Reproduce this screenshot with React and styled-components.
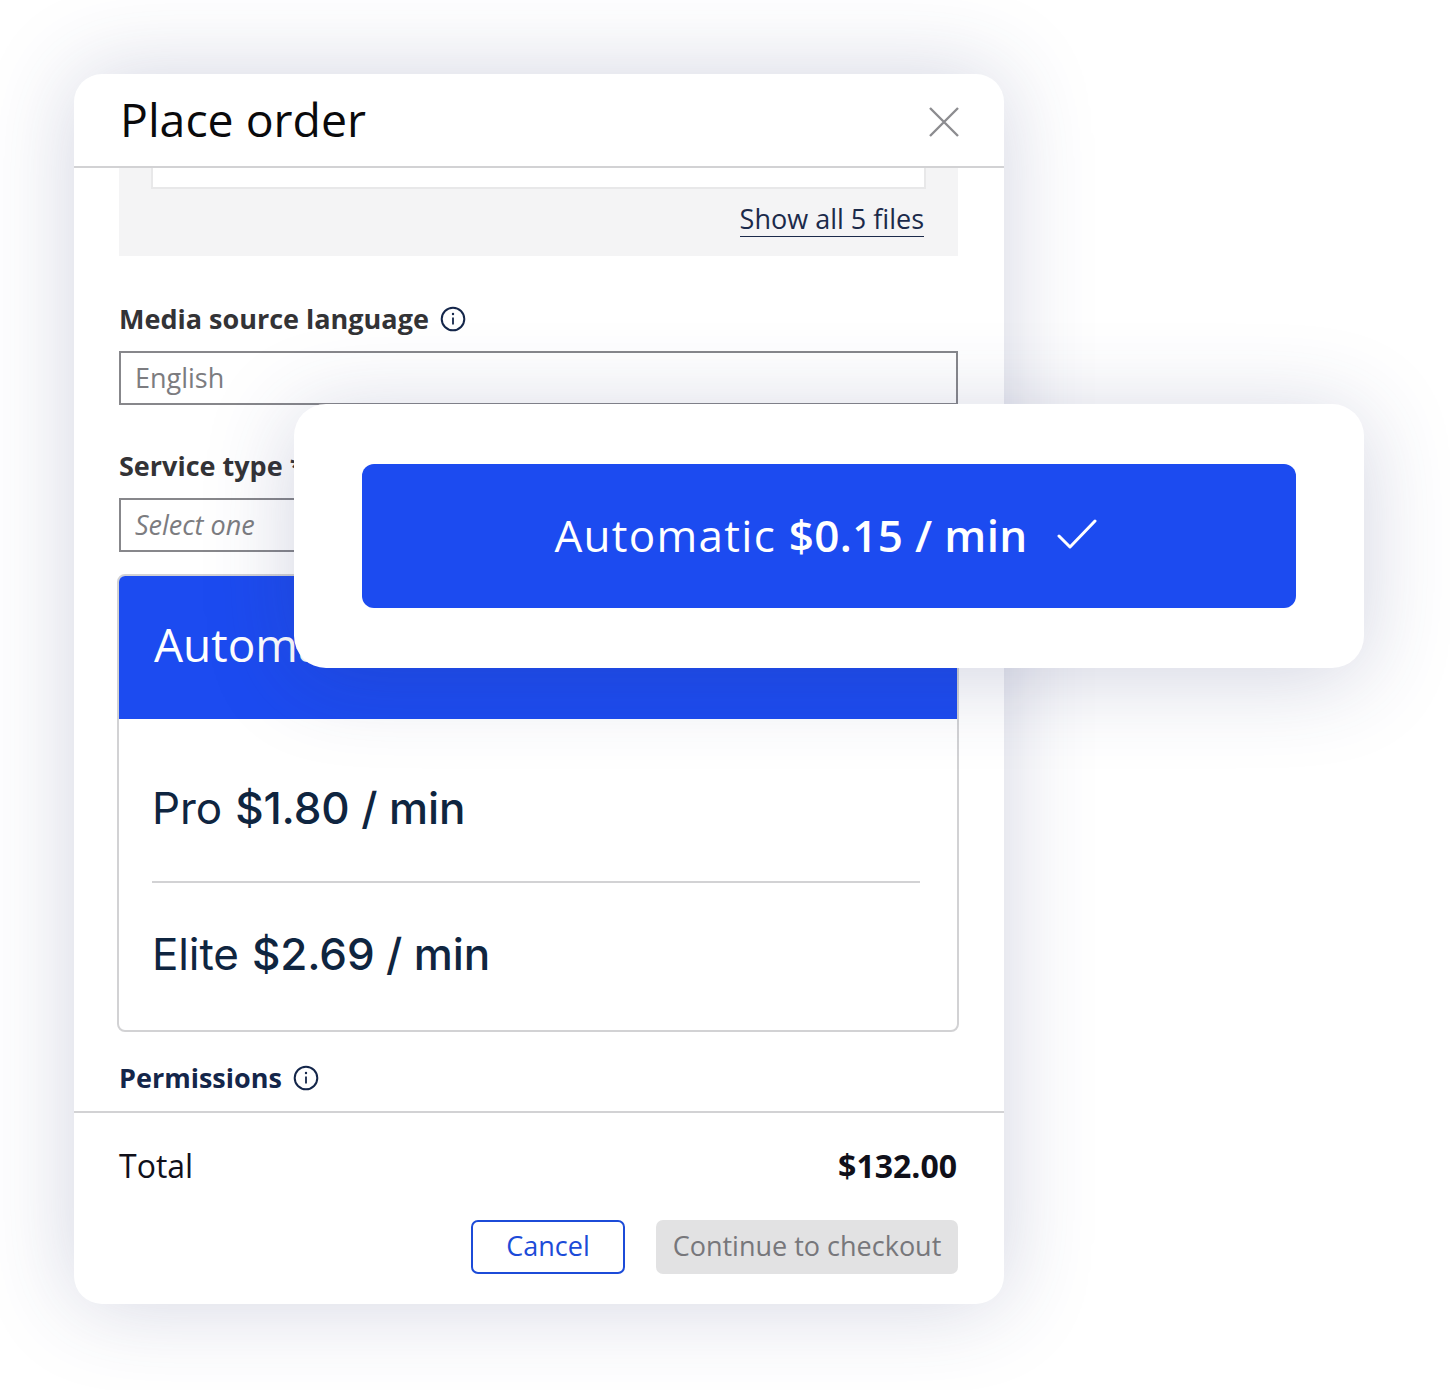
import React from 'react';
import styled, { createGlobalStyle } from 'styled-components';

const Global = createGlobalStyle`
  html, body { margin: 0; padding: 0; background: #fff; }
  body { font-family: "Open Sans", "Liberation Sans", sans-serif; }
  * { box-sizing: border-box; }
`;

const Page = styled.div`
  position: relative;
  width: 1450px;
  height: 1390px;
  padding: 74px;
  overflow: hidden;
`;

const Modal = styled.section`
  width: 930px;
  height: 1230px;
  background: #fff;
  border-radius: 28px;
  box-shadow: 0 0 90px rgba(50, 60, 120, 0.22);
  display: flex;
  flex-direction: column;
  overflow: hidden;
`;

const Header = styled.header`
  height: 94px;
  flex: none;
  border-bottom: 2px solid #d2d2d4;
  padding: 0 45px 0 46px;
  display: flex;
  align-items: center;
  justify-content: space-between;
`;

const Title = styled.h1`
  margin: -2px 0 0;
  font-size: 46.4px;
  font-weight: 400;
  color: #0a0a0c;
  line-height: 94px;
`;

const CloseButton = styled.span`
  display: flex;
  color: #8c8c90;
  margin-top: 4px;
`;

const Body = styled.div`
  flex: 1;
  padding: 0 46px 0 45px;
  overflow: hidden;
`;

const FilePanel = styled.div`
  height: 88px;
  background: #f4f4f5;
  padding: 0 32px;
`;

const FileStrip = styled.div`
  height: 21px;
  background: #fff;
  border: 2px solid #e8e8e9;
  border-top: 0;
`;

const ShowAllRow = styled.div`
  display: flex;
  justify-content: flex-end;
  padding: 13px 2px 0 0;
`;

const ShowAll = styled.a`
  font-size: 27px;
  line-height: 34px;
  color: #1b2a4a;
  border-bottom: 1px solid #1b2a4a;
`;

const Field = styled.div`
  padding-top: ${(p) => p.$top}px;
`;

const Label = styled.div`
  display: flex;
  align-items: center;
  gap: 11px;
  height: 36px;
  font-size: 27px;
  font-weight: 700;
  color: ${(p) => p.$color || '#333336'};
  white-space: nowrap;
`;

const LabelText = styled.span`
  position: relative;
  top: -1px;
`;

const InfoIcon = styled.svg`
  width: 26px;
  height: 26px;
  flex: none;
  color: #14264a;
`;

const Input = styled.div`
  height: 54px;
  margin-top: ${(p) => p.$gap}px;
  border: 2px solid #87878b;
  padding: 0 14px 2px;
  display: flex;
  align-items: center;
  font-size: 27px;
  font-style: ${(p) => (p.$italic ? 'italic' : 'normal')};
  color: #7c7c80;
`;

const OptionCard = styled.div`
  margin: 22px -1px 0 -2px;
  height: 458px;
  border: 2px solid #d2d2d4;
  border-radius: 8px;
  overflow: hidden;
`;

const SelectedOption = styled.div`
  margin: -1px -1px 0;
  height: 144px;
  background: #1c4bf0;
  display: flex;
  align-items: center;
  padding: 0 0 6px 36px;
  font-size: 46px;
  color: #fff;
`;

const OptionList = styled.div`
  padding: 0 37px 0 33px;
`;

const Option = styled.div`
  height: ${(p) => p.$h}px;
  display: flex;
  align-items: center;
  gap: 0.3em;
  font-family: Inter, "Liberation Sans", sans-serif;
  font-size: 44px;
  letter-spacing: -0.12px;
  color: #0f2540;
  border-bottom: ${(p) => (p.$rule ? '2px solid #d2d2d4' : '0')};
  padding-top: ${(p) => p.$pad || 0}px;
`;

const Price = styled.b`
  font-weight: 500;
`;

const Footer = styled.footer`
  height: 193px;
  flex: none;
  border-top: 2px solid #d2d2d4;
  padding: 0 47px 0 45px;
`;

const TotalRow = styled.div`
  height: 107px;
  display: flex;
  align-items: center;
  justify-content: space-between;
  padding-bottom: 3px;
  font-size: 32px;
  color: #10101a;
`;

const TotalValue = styled.b`
  font-weight: 700;
  font-size: 32px;
`;

const Actions = styled.div`
  display: flex;
  justify-content: flex-end;
  gap: 31px;
  margin-right: -1px;
`;

const GhostButton = styled.button`
  width: 154px;
  height: 54px;
  font: inherit;
  font-size: 27px;
  color: #1c4bd8;
  background: #fff;
  border: 2px solid #1c4bd8;
  border-radius: 7px;
  padding: 0 0 3px;
`;

const DisabledButton = styled.button`
  width: 302px;
  height: 54px;
  font: inherit;
  font-size: 27px;
  color: #77777b;
  background: #e2e2e3;
  border: 0;
  border-radius: 7px;
  padding: 0 0 3px;
  white-space: nowrap;
`;

const FloatCard = styled.div`
  position: absolute;
  left: 294px;
  top: 404px;
  width: 1070px;
  height: 264px;
  padding: 60px 68px;
  background: #fff;
  border-radius: 32px;
  box-shadow: 0 10px 90px rgba(50, 60, 120, 0.22);
`;

const FloatButton = styled.div`
  height: 144px;
  background: #1c4bf0;
  border-radius: 12px;
  display: flex;
  align-items: center;
  justify-content: center;
  gap: 29px;
  padding: 0 7px 3px 0;
  font-size: 44px;
  color: #fff;
  letter-spacing: 1.3px;
`;

const FloatLabel = styled.span`
  white-space: pre;
`;

const FloatPrice = styled.b`
  font-weight: 600;
  letter-spacing: 0.35px;
`;

const Info = () => (
  <InfoIcon viewBox="0 0 26 26" fill="none" stroke="currentColor">
    <circle cx="13" cy="13" r="11.3" strokeWidth="2" />
    <path d="M13 11.5v7" strokeWidth="1.8" />
    <circle cx="13" cy="8" r="1.2" fill="currentColor" stroke="none" />
  </InfoIcon>
);

export default function App() {
  return (
    <>
      <Global />
      <Page>
        <Modal>
          <Header>
            <Title>Place order</Title>
            <CloseButton>
              <svg width="30" height="30" viewBox="0 0 30 30" fill="none" stroke="currentColor" strokeWidth="2.4">
                <path d="M1 1l28 28M29 1L1 29" />
              </svg>
            </CloseButton>
          </Header>
          <Body>
            <FilePanel>
              <FileStrip />
              <ShowAllRow>
                <ShowAll>Show all 5 files</ShowAll>
              </ShowAllRow>
            </FilePanel>
            <Field $top={45}>
              <Label>
                <LabelText>Media source language</LabelText>
                <Info />
              </Label>
              <Input $gap={14}>English</Input>
            </Field>
            <Field $top={43}>
              <Label>
                <LabelText>Service type *</LabelText>
              </Label>
              <Input $gap={14} $italic>Select one</Input>
            </Field>
            <OptionCard>
              <SelectedOption>Automatic</SelectedOption>
              <OptionList>
                <Option $h={164} $pad={16} $rule>
                  <span>Pro</span>
                  <Price>$1.80 / min</Price>
                </Option>
                <Option $h={141}>
                  <span>Elite</span>
                  <Price>$2.69 / min</Price>
                </Option>
              </OptionList>
            </OptionCard>
            <Field $top={28}>
              <Label $color="#14264a">
                <LabelText>Permissions</LabelText>
                <Info />
              </Label>
            </Field>
          </Body>
          <Footer>
            <TotalRow>
              <span>Total</span>
              <TotalValue>$132.00</TotalValue>
            </TotalRow>
            <Actions>
              <GhostButton>Cancel</GhostButton>
              <DisabledButton>Continue to checkout</DisabledButton>
            </Actions>
          </Footer>
        </Modal>
        <FloatCard>
          <FloatButton>
            <FloatLabel>
              Automatic <FloatPrice>$0.15 / min</FloatPrice>
            </FloatLabel>
            <svg width="40" height="32" viewBox="0 0 40 32" fill="none" stroke="currentColor" strokeWidth="3" strokeLinecap="round" strokeLinejoin="round">
              <path d="M2 17l11 11L38 2" />
            </svg>
          </FloatButton>
        </FloatCard>
      </Page>
    </>
  );
}
